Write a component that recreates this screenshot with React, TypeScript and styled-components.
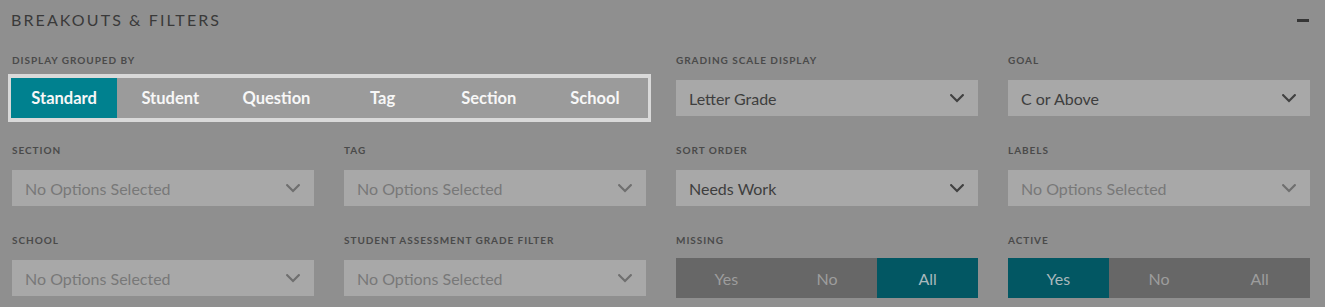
import React from "react";
import styled, { createGlobalStyle } from "styled-components";

const Global = createGlobalStyle`
  html, body { margin: 0; padding: 0; background: #8f8f8f; }
  body { font-family: Lato, "Open Sans", sans-serif; }
  * { box-sizing: border-box; }
`;

const Panel = styled.section`
  width: 1325px;
  height: 307px;
  background: #8f8f8f;
  overflow: hidden;
`;

const Header = styled.header`
  height: 40px;
  display: flex;
  align-items: center;
  justify-content: space-between;
  padding: 0 16px 0 11px;
`;

const Title = styled.h2`
  margin: 0;
  font-family: Lato, sans-serif;
  font-size: 16px;
  font-weight: 400;
  letter-spacing: 2.1px;
  line-height: 40px;
  color: #3a3a3a;
`;

const Collapse = styled.span`
  display: block;
  width: 12px;
  height: 3px;
  background: #353535;
`;

const Grid = styled.div`
  margin-top: 14px;
  display: grid;
  grid-template-columns: repeat(4, 1fr);
  column-gap: 30px;
  row-gap: 22px;
  padding: 0 15px 0 12px;
`;

const Field = styled.div<{ $span?: number }>`
  display: flex;
  flex-direction: column;
  grid-column: span ${(p) => p.$span ?? 1};
  min-width: 0;
`;

const Label = styled.div`
  height: 12px;
  line-height: 12px;
  margin-bottom: 8px;
  font-size: 10px;
  font-weight: 700;
  letter-spacing: 0.95px;
  color: #4a4a4a;
  white-space: nowrap;
`;

const Slot = styled.div`
  height: 48px;
  display: flex;
  align-items: center;
`;

const Segmented = styled.div`
  display: flex;
  flex-shrink: 0;
  width: calc(100% + 9px);
  margin-left: -4px;
  height: 48px;
  border: 3px solid #d9d9d9;
  border-top-width: 4px;
  border-bottom-width: 4px;
  background: #9b9b9b;
`;

const Tab = styled.div<{ $active?: boolean }>`
  flex: 1;
  display: flex;
  align-items: center;
  justify-content: center;
  font-size: 16.5px;
  font-weight: 700;
  color: #f7f7f7;
  background: ${(p) => (p.$active ? "#00818f" : "transparent")};
`;

const Select = styled.div<{ $placeholder?: boolean }>`
  width: 100%;
  height: 36px;
  background: #a8a8a8;
  display: flex;
  align-items: center;
  justify-content: space-between;
  padding: 0 14px 0 13px;
  font-size: 16px;
  color: ${(p) => (p.$placeholder ? "#787878" : "#3e3e3e")};
  white-space: nowrap;
`;

const Toggle = styled.div`
  width: 100%;
  height: 40px;
  display: flex;
  background: #676767;
`;

const ToggleOption = styled.div<{ $active?: boolean }>`
  flex: 1;
  display: flex;
  align-items: center;
  justify-content: center;
  font-size: 16px;
  color: ${(p) => (p.$active ? "#a9b9bc" : "#9d9d9d")};
  background: ${(p) => (p.$active ? "#025763" : "transparent")};
`;

const Chevron = ({ color }: { color: string }) => (
  <svg width="14" height="9" viewBox="0 0 14 9" aria-hidden="true">
    <polyline
      points="1.2,1.2 7,7 12.8,1.2"
      fill="none"
      stroke={color}
      strokeWidth="2.2"
      strokeLinecap="square"
    />
  </svg>
);

const Dropdown = ({ value }: { value?: string }) => (
  <Select $placeholder={!value}>
    <span>{value ?? "No Options Selected"}</span>
    <Chevron color={value ? "#414141" : "#6f6f6f"} />
  </Select>
);

const YesNoAll = ({ active }: { active: string }) => (
  <Toggle>
    {["Yes", "No", "All"].map((o) => (
      <ToggleOption key={o} $active={o === active}>
        {o}
      </ToggleOption>
    ))}
  </Toggle>
);

export default function App() {
  const tabs = ["Standard", "Student", "Question", "Tag", "Section", "School"];
  return (
    <Panel>
      <Global />
      <Header>
        <Title>BREAKOUTS &amp; FILTERS</Title>
        <Collapse />
      </Header>
      <Grid>
        <Field $span={2}>
          <Label>DISPLAY GROUPED BY</Label>
          <Slot>
            <Segmented>
              {tabs.map((t) => (
                <Tab key={t} $active={t === "Standard"}>
                  {t}
                </Tab>
              ))}
            </Segmented>
          </Slot>
        </Field>
        <Field>
          <Label>GRADING SCALE DISPLAY</Label>
          <Slot>
            <Dropdown value="Letter Grade" />
          </Slot>
        </Field>
        <Field>
          <Label>GOAL</Label>
          <Slot>
            <Dropdown value="C or Above" />
          </Slot>
        </Field>

        <Field>
          <Label>SECTION</Label>
          <Slot>
            <Dropdown />
          </Slot>
        </Field>
        <Field>
          <Label>TAG</Label>
          <Slot>
            <Dropdown />
          </Slot>
        </Field>
        <Field>
          <Label>SORT ORDER</Label>
          <Slot>
            <Dropdown value="Needs Work" />
          </Slot>
        </Field>
        <Field>
          <Label>LABELS</Label>
          <Slot>
            <Dropdown />
          </Slot>
        </Field>

        <Field>
          <Label>SCHOOL</Label>
          <Slot>
            <Dropdown />
          </Slot>
        </Field>
        <Field>
          <Label>STUDENT ASSESSMENT GRADE FILTER</Label>
          <Slot>
            <Dropdown />
          </Slot>
        </Field>
        <Field>
          <Label>MISSING</Label>
          <Slot>
            <YesNoAll active="All" />
          </Slot>
        </Field>
        <Field>
          <Label>ACTIVE</Label>
          <Slot>
            <YesNoAll active="Yes" />
          </Slot>
        </Field>
      </Grid>
    </Panel>
  );
}
